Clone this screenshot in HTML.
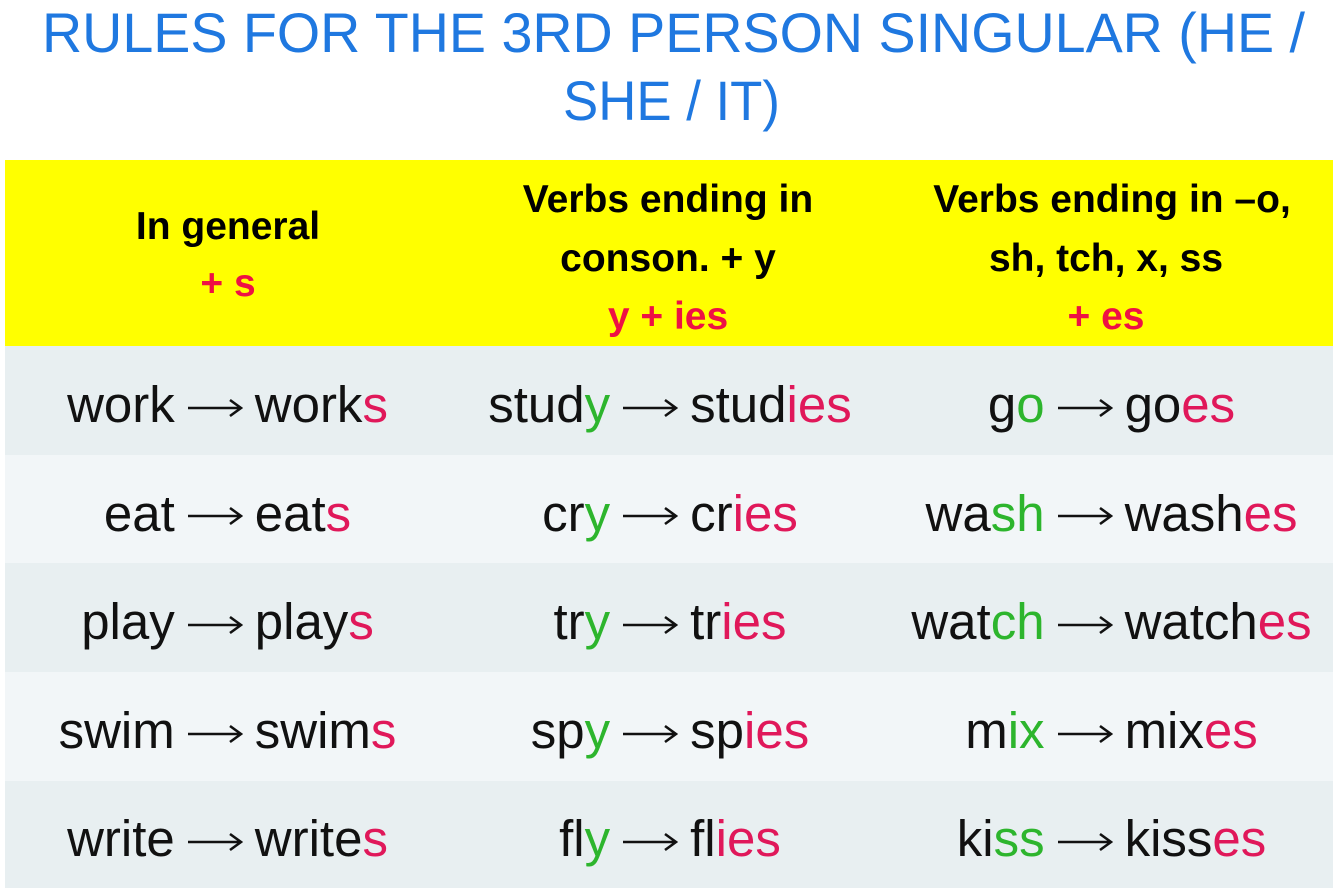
<!DOCTYPE html>
<html><head><meta charset="utf-8"><style>
html,body{margin:0;padding:0;background:#fff;width:1337px;height:893px;overflow:hidden;position:relative;font-family:"Liberation Sans",Arial,sans-serif}
svg.t{position:absolute;left:0;top:0}
.hdr{position:absolute;left:5px;top:160px;width:1328px;height:186px;background:#ffff00}
.h{position:absolute;font-weight:bold;font-size:39px;text-align:center;color:#000;white-space:nowrap;transform:translateX(-50%)}
.r{color:#ee1144}
.row{position:absolute;left:5px;width:1328px;display:flex}
.row>div{flex:none;display:flex;align-items:center;justify-content:center;font-size:51px;color:#111;white-space:nowrap;height:100%;padding-top:8px;box-sizing:border-box}
.c1{width:445px}.c2{width:440px}.c3{width:443px}
.g{color:#2db52d}.p{color:#e0185a}
svg.a{margin:6px 12px 0 12px;flex:none}
</style></head><body>
<svg class="t" width="1337" height="160">
<text x="42" y="52" font-family="Liberation Sans" font-size="56" fill="#1f78e0" textLength="1263" lengthAdjust="spacingAndGlyphs">RULES FOR THE 3RD PERSON SINGULAR (HE /</text>
<text x="563" y="120" font-family="Liberation Sans" font-size="56" fill="#1f78e0" textLength="217" lengthAdjust="spacingAndGlyphs">SHE / IT)</text>
<defs><symbol id="ar" viewBox="0 0 56 24"><path d="M1 12H53M43 4L54 12L43 20" fill="none" stroke="#111" stroke-width="2.6"/></symbol></defs>
</svg>
<div class="hdr"></div>
<div class="h" style="left:228px;top:205px">In general</div>
<div class="h r" style="left:228px;top:262px">+ s</div>
<div class="h" style="left:668px;top:178px">Verbs ending in</div>
<div class="h" style="left:668px;top:237px">conson. + y</div>
<div class="h r" style="left:668px;top:295px">y + ies</div>
<div class="h" style="left:1112px;top:178px">Verbs ending in –o,</div>
<div class="h" style="left:1106px;top:237px">sh, tch, x, ss</div>
<div class="h r" style="left:1106px;top:295px">+ es</div>

<div class="row" style="top:346px;height:109px;background:#e8eff1">
<div class="c1">work<svg class="a" width="56" height="24"><use href="#ar"/></svg>work<span class="p">s</span></div>
<div class="c2">stud<span class="g">y</span><svg class="a" width="56" height="24"><use href="#ar"/></svg>stud<span class="p">ies</span></div>
<div class="c3">g<span class="g">o</span><svg class="a" width="56" height="24"><use href="#ar"/></svg>go<span class="p">es</span></div>
</div>
<div class="row" style="top:455px;height:108px;background:#f2f6f8">
<div class="c1">eat<svg class="a" width="56" height="24"><use href="#ar"/></svg>eat<span class="p">s</span></div>
<div class="c2">cr<span class="g">y</span><svg class="a" width="56" height="24"><use href="#ar"/></svg>cr<span class="p">ies</span></div>
<div class="c3">wa<span class="g">sh</span><svg class="a" width="56" height="24"><use href="#ar"/></svg>wash<span class="p">es</span></div>
</div>
<div class="row" style="top:563px;height:109px;background:#e8eff1">
<div class="c1">play<svg class="a" width="56" height="24"><use href="#ar"/></svg>play<span class="p">s</span></div>
<div class="c2">tr<span class="g">y</span><svg class="a" width="56" height="24"><use href="#ar"/></svg>tr<span class="p">ies</span></div>
<div class="c3">wat<span class="g">ch</span><svg class="a" width="56" height="24"><use href="#ar"/></svg>watch<span class="p">es</span></div>
</div>
<div class="row" style="top:672px;height:109px;background:#f2f6f8">
<div class="c1">swim<svg class="a" width="56" height="24"><use href="#ar"/></svg>swim<span class="p">s</span></div>
<div class="c2">sp<span class="g">y</span><svg class="a" width="56" height="24"><use href="#ar"/></svg>sp<span class="p">ies</span></div>
<div class="c3">m<span class="g">ix</span><svg class="a" width="56" height="24"><use href="#ar"/></svg>mix<span class="p">es</span></div>
</div>
<div class="row" style="top:781px;height:107px;background:#e8eff1">
<div class="c1">write<svg class="a" width="56" height="24"><use href="#ar"/></svg>write<span class="p">s</span></div>
<div class="c2">fl<span class="g">y</span><svg class="a" width="56" height="24"><use href="#ar"/></svg>fl<span class="p">ies</span></div>
<div class="c3">ki<span class="g">ss</span><svg class="a" width="56" height="24"><use href="#ar"/></svg>kiss<span class="p">es</span></div>
</div>
</body></html>
